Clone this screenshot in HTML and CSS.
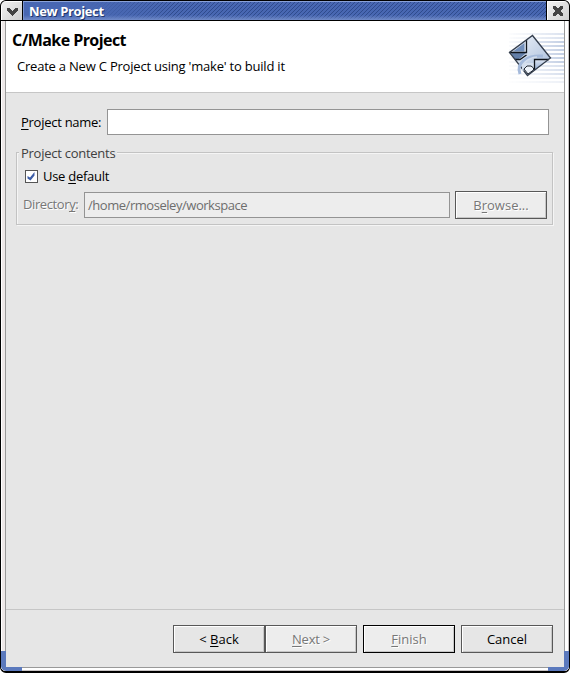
FILE: index.html
```html
<!DOCTYPE html>
<html lang="en">
<head>
<meta charset="utf-8">
<title>New Project</title>
<link rel="stylesheet" href="styles.css">
</head>
<body>
<div class="window">
  <header class="titlebar">
    <div class="title-button menu-button">
      <svg width="21" height="19" shape-rendering="crispEdges"><path d="M6 7h3v1h1v1h1v1h1v-1h1v-1h1v-1h3v3h-1v1h-1v1h-1v1h-1v1h-1v1h-1v-1h-1v-1h-1v-1h-1v-1h-1v-1h-1z" fill="#434343"/></svg>
    </div>
    <div class="title-strip"><span class="title-text">New Project</span></div>
    <div class="title-button close-button">
      <svg width="22" height="19" shape-rendering="crispEdges"><path d="M6 5h3v1h1v1h2v-1h1v-1h3v3h-1v1h-1v2h1v1h1v3h-3v-1h-1v-1h-2v1h-1v1h-3v-3h1v-1h1v-2h-1v-1h-1z" fill="#434343"/></svg>
    </div>
  </header>
  <div class="frame">
    <main class="dialog">
      <section class="banner">
        <div class="banner-copy">
          <h1>C/Make Project</h1>
          <p class="subtitle">Create a New C Project using 'make' to build it</p>
        </div>
        <svg class="banner-icon" width="60" height="60" viewBox="0 0 60 60">
          <defs>
            <linearGradient id="fade" gradientUnits="userSpaceOnUse" x1="0" x2="60"><stop offset="0" stop-color="#c3cfe4" stop-opacity="0"/><stop offset="1" stop-color="#c3cfe4"/></linearGradient>
            <linearGradient id="sheet" x1="0" x2="1" y1="0" y2="1"><stop offset="0" stop-color="#f2f5fa"/><stop offset="1" stop-color="#a3b9d9"/></linearGradient>
            <linearGradient id="glow" x1="0" x2="0" y1="0" y2="1"><stop offset="0" stop-color="#dce5f2"/><stop offset="1" stop-color="#95add1"/></linearGradient>
          </defs>
          <g stroke="url(#fade)" stroke-width="2">
            <path opacity=".6" d="M5 3L60 3.01M5 7L60 7.01"/>
            <path d="M5 11L60 11.01M5 15L60 15.01M5 19L60 19.01M5 23L60 23.01M5 27L60 27.01M5 31L60 31.01"/>
            <path opacity=".65" d="M5 35L60 35.01M5 39L60 39.01M5 43L60 43.01"/>
            <path opacity=".3" d="M5 47L60 47.01M5 51L60 51.01"/>
          </g>
          <path d="M28.500 4.500L46.500 27L23.500 44.500L5.500 21.500Z" fill="url(#sheet)"/>
          <path d="M7 21.500L22.500 10V21.500Z" fill="#dfe7f2"/>
          <path d="M9 20.500L20.500 12V20.500Z" fill="#7390bc"/>
          <path d="M7 22H22L14 29H11Z" fill="#637fa9"/>
          <path d="M12 30L22 24V32H30V39L23.500 43Z" fill="#d6e0ee"/>
          <path d="M31 29H44L31 38.500Z" fill="url(#glow)"/>
          <path d="M5.500 21.500H22.500V9M11 28.500H16L22.500 24M30.500 39V28.500H45" fill="none" stroke="#10151d" stroke-width="1.300"/>
          <path d="M28.500 4.500L46.500 27L23.500 44.500L5.500 21.500Z" fill="none" stroke="#343e4d" stroke-width="1.300"/>
          <path d="M16 43C12 33 21 24 39 25" fill="none" stroke="#a5badb" stroke-width="3"/>
          <path d="M19 40C17 33 23 27 33 26" fill="none" stroke="#d2ddec" stroke-width="1.500"/>
          <path d="M20 38L23 35H27L29.500 37V39L24 43Z" fill="#eef3fa" stroke="#202731"/>
        </svg>
      </section>
      <section class="page">
        <div class="name-row">
          <label class="name-label" for="name"><u>P</u>roject name:</label>
          <input id="name" class="name-input" type="text">
        </div>
        <fieldset class="contents">
          <span class="legend">Project contents</span>
          <label class="check-row"><span class="checkbox"><svg width="11" height="11"><path d="M1.500 5L4 6.500L8.500 1V4.500L4.500 9.500L1.500 7.500Z" fill="#3c5da8"/></svg></span><span class="check-label">Use <u>d</u>efault</span></label>
          <div class="directory-row">
            <span class="directory-label">Director<u>y</u>:</span>
            <div class="directory-input"><span>/home/rmoseley/workspace</span></div>
            <button class="button disabled" disabled><span>B<u>r</u>owse...</span></button>
          </div>
        </fieldset>
      </section>
      <footer class="actions">
        <button class="button"><span>&lt; <u>B</u>ack</span></button>
        <button class="button disabled" disabled><span class="next-text"><u>N</u>ext &gt;</span></button>
        <button class="button disabled default" disabled><span><u>F</u>inish</span></button>
        <button class="button cancel"><span>Cancel</span></button>
      </footer>
    </main>
  </div>
  <i class="corner corner-left"></i>
  <i class="corner corner-right"></i>
</div>
</body>
</html>
```
FILE: styles.css
```css
* { box-sizing: border-box; }
body {
  margin: 0;
  background: #fff;
  font: 13px/18px "Open Sans", "Noto Sans", sans-serif;
  color: #000;
}
u { text-decoration: underline; text-decoration-thickness: 1px; text-underline-offset: 2px; text-decoration-skip-ink: none; }
.window {
  position: relative;
  display: flex;
  flex-direction: column;
  width: 570px;
  height: 673px;
  border: 1px solid #000;
  border-bottom-width: 2px;
  border-radius: 6px;
  background: #000;
  overflow: hidden;
}
.titlebar { display: flex; height: 20px; border-bottom: 1px solid #000; }
.title-button {
  height: 19px;
  border-top: 1px solid #fff;
  border-left: 1px solid #fff;
  background: linear-gradient(135deg, #f0f0f0, #cfcfcf);
}
.title-button svg { display: block; margin: -1px 0 0 -1px; }
.menu-button { width: 21px; }
.close-button { width: 22px; }
.title-strip {
  flex: 1;
  margin: 0 1px;
  padding-left: 5px;
  border-top: 1px solid #8ba3d8;
  border-left: 1px solid #7892cf;
  background:
    linear-gradient(180deg, transparent 13px, #718bc9 18px),
    linear-gradient(90deg, #4867b2 65px, transparent 150px),
    repeating-linear-gradient(135deg, #4867b2 0 1.700px, #2f4b8d 1.900px 2.600px, #4867b2 2.828px);
}
.title-text {
  display: block;
  color: #fff;
  font-weight: 700;
  line-height: 19px;
  letter-spacing: -.38px;
  text-shadow: 1px 1px #23376b;
}
.frame {
  flex: 1;
  min-height: 0;
  padding: 0 4px 3px 3px;
  border-left: 1px solid #fff;
  background: #eee9e9;
  box-shadow: inset 0 -1px #c8c4c4, inset -1px 0 #c8c4c4, inset -4px -3px #fff;
}
.dialog {
  display: flex;
  flex-direction: column;
  height: 100%;
  border: 1px solid #999;
  border-top: 0;
  background: #e6e6e6;
}
.banner {
  display: flex;
  justify-content: space-between;
  height: 72px;
  border-bottom: 1px solid #c6c6c6;
  background: #fff;
}
.banner-copy { padding: 9px 0 0 6px; }
h1 { margin: 0; font-size: 16px; line-height: 20px; letter-spacing: -.56px; white-space: nowrap; }
.subtitle { margin: 7px 0 0 5px; letter-spacing: -.21px; white-space: nowrap; }
.banner-icon { margin-top: 10px; }
.page { flex: 1; padding: 16px 11px 0 10px; }
.name-row { display: flex; align-items: center; padding-left: 5px; }
.name-label { width: 86px; letter-spacing: -.27px; white-space: nowrap; }
.name-input { width: 442px; height: 26px; padding: 0 4px; border: 1px solid #949494; background: #fff; font: inherit; }
.contents {
  position: relative;
  height: 73px;
  margin: 17px 0 0;
  padding: 17px 5px 0 8px;
  border: 1px solid #c3c3c3;
  box-shadow: inset 1px 1px #f5f5f5, 1px 1px #f5f5f5;
}
.contents { padding-left: 6px; }
.legend { position: absolute; left: 2px; top: -9px; padding: 0 2px; background: #e6e6e6; color: #404040; letter-spacing: -.26px; white-space: nowrap; }
.check-row { display: flex; align-items: center; height: 13px; padding-left: 2px; }
.checkbox { width: 13px; height: 13px; margin-right: 5px; border: 1px solid #555; background: #fff; }
.checkbox svg { display: block; }
.check-label { padding-bottom: 2px; letter-spacing: -.28px; white-space: nowrap; }
.directory-row { display: flex; align-items: center; margin-top: 8px; }
.directory-label { width: 61px; padding-bottom: 2px; color: #777; letter-spacing: -.4px; text-shadow: 1px 1px #fff; white-space: nowrap; }
.directory-input { width: 366px; height: 26px; margin-right: 5px; padding: 2px 3px; border: 1px solid #949494; background: #ededed; color: #6d6d6d; line-height: 20px; letter-spacing: -.46px; white-space: nowrap; }
.button {
  flex: none;
  width: 92px;
  height: 28px;
  padding: 0;
  border: 1px solid #585858;
  border-radius: 0;
  background: #e6e6e6;
  box-shadow: inset 1px 1px #fff, inset -1px -1px #c6c6c6;
  color: #000;
  font: inherit;
  text-align: center;
}
.disabled { background: #ededed; color: #777; text-shadow: 1px 1px #fff; }
.next-text { letter-spacing: -.25px; }
.default { margin-left: 6px; border-color: #000; }
.cancel { margin-left: 6px; }
.actions { display: flex; justify-content: flex-end; height: 58px; padding: 15px 11px 0 0; border-top: 1px solid #c6c6c6; }
.corner { position: absolute; bottom: 0; width: 21px; height: 20px; border: solid #5b79bd; }
.corner-left { left: 0; border-width: 0 0 4px 5px; border-radius: 0 0 0 5px; }
.corner-right { right: 0; border-width: 0 5px 4px 0; border-radius: 0 0 5px 0; }
```
